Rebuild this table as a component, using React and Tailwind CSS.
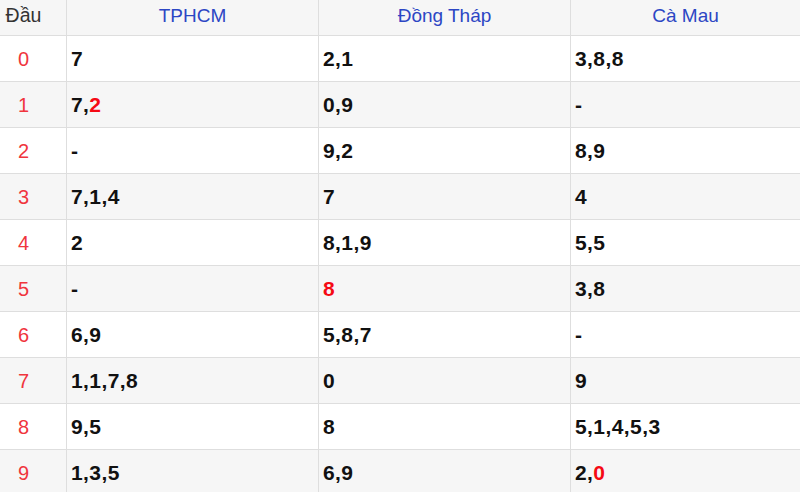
const rows = [
  ['0', '7', '2,1', '3,8,8'],
  ['1', '7,*2', '0,9', '-'],
  ['2', '-', '9,2', '8,9'],
  ['3', '7,1,4', '7', '4'],
  ['4', '2', '8,1,9', '5,5'],
  ['5', '-', '*8', '3,8'],
  ['6', '6,9', '5,8,7', '-'],
  ['7', '1,1,7,8', '0', '9'],
  ['8', '9,5', '8', '5,1,4,5,3'],
  ['9', '1,3,5', '6,9', '2,*0'],
];

// a leading * marks a number shown in red
function Value({ text }) {
  const parts = text.split(',');
  return (
    <span>
      {parts.map((p, i) => (
        <span key={i}>
          {i > 0 && ','}
          {p.startsWith('*') ? <span className="text-[#f50a14]">{p.slice(1)}</span> : p}
        </span>
      ))}
    </span>
  );
}

export default function App() {
  const headers = ['TPHCM', 'Đồng Tháp', 'Cà Mau'];
  return (
    <div
      className="w-[800px] h-[492px] overflow-hidden bg-white"
      style={{ fontFamily: '"Liberation Sans", Arial, sans-serif' }}
    >
      <div className="grid grid-cols-[67px_252px_252px_1fr]">
        {/* header */}
        <div className="h-[36px] border-b border-r border-[#dedede] bg-[#f6f6f6] flex items-center justify-center pr-[19px] text-[19.5px] text-[#333] pb-[3px]">
          Đầu
        </div>
        {headers.map((h, i) => (
          <div
            key={h}
            className={`h-[36px] border-b border-[#dedede] bg-[#f6f6f6] flex items-center justify-center text-[19px] text-[#2c46c4] pb-[3px] ${i < 2 ? 'border-r' : ''}`}
          >
            {h}
          </div>
        ))}

        {rows.map((r, ri) => {
          const bg = ri % 2 === 1 ? 'bg-[#f6f6f6]' : 'bg-white';
          return [
            <div
              key={`h${ri}`}
              className={`h-[46px] border-b border-r border-[#dedede] ${bg} flex items-center justify-center pr-[19px] text-[20px] text-[#f0353d]`}
            >
              {r[0]}
            </div>,
            ...r.slice(1).map((v, ci) => (
              <div
                key={`${ri}-${ci}`}
                className={`h-[46px] border-b border-[#dedede] ${bg} ${ci < 2 ? 'border-r' : ''} flex items-center pl-[4px] text-[21px] font-bold text-[#111] tracking-[0.4px]`}
              >
                <Value text={v} />
              </div>
            )),
          ];
        })}
      </div>
    </div>
  );
}
